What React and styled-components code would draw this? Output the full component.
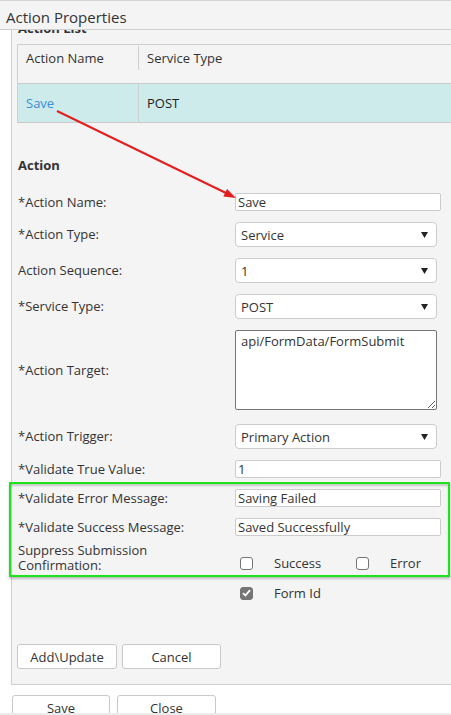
import React from "react";
import styled, { createGlobalStyle, css } from "styled-components";

const Global = createGlobalStyle`
  html, body { margin: 0; padding: 0; background: #fff; }
  * { box-sizing: border-box; }
`;

const Page = styled.div`
  position: relative;
  width: 451px;
  height: 715px;
  overflow: hidden;
  display: flex;
  flex-direction: column;
  background: #fff;
  font-family: "Open Sans", "Noto Sans", sans-serif;
  color: #333;
`;

const TitleBar = styled.div`
  flex: 0 0 30px;
  height: 30px;
  border-top: 1px solid #d2d2d2;
  border-bottom: 1px solid #cdcdcd;
  background: #f4f4f4;
  padding: 3px 0 0 6px;
  display: flex;
  align-items: center;
  font-size: 15px;
  color: #333;
`;

const Content = styled.div`
  flex: 1 1 auto;
  overflow: hidden;
  padding-left: 11px;
`;

const Panel = styled.div`
  width: 470px;
  margin-top: -11px;
  border-left: 1px solid #cfcfcf;
  border-bottom: 1px solid #cfcfcf;
  background: #f4f4f4;
  padding: 0 0 15px 5px;
`;

const Heading = styled.div`
  font-size: 13px;
  font-weight: 700;
  line-height: 18px;
  color: #333;
  margin: ${(p) => p.$margin || "0"};
`;

const TableBox = styled.div`
  border-top: 1px solid #cfcfcf;
  border-left: 1px solid #cfcfcf;
`;

const TableRow = styled.div`
  display: grid;
  grid-template-columns: 121px 1fr;
  height: 39px;
  border-bottom: 1px solid #cacaca;
  background: ${(p) => (p.$selected ? "#cdebeb" : "#f4f4f4")};
`;

const HeadCell = styled.div`
  padding-top: 1px;
`;

const HeadLabel = styled.div`
  height: 24px;
  line-height: 24px;
  padding-left: 8px;
  font-size: 13px;
  color: #333;
  ${(p) => p.$divider && css`border-right: 1px solid #d0d0d0;`}
`;

const DataCell = styled.div`
  display: flex;
  align-items: center;
  padding-left: 8px;
  font-size: 13px;
  color: ${(p) => (p.$link ? "#3b8dd5" : "#222")};
  ${(p) => p.$divider && css`border-right: 1px solid #d0d0d0;`}
`;

const Form = styled.div`
  display: flex;
  flex-direction: column;
  gap: 11px;
  padding-left: 1px;
`;

const Row = styled.div`
  display: grid;
  grid-template-columns: 217px 1fr;
  align-items: ${(p) => p.$align || "center"};
  margin-top: ${(p) => p.$mt || "0"};
`;

const Label = styled.div`
  font-size: 13px;
  line-height: 15px;
  color: #333;
  max-width: 190px;
`;

const TextInput = styled.input`
  width: 206px;
  height: 18px;
  border: 1px solid #cccccc;
  border-radius: 2px;
  background: #fff;
  padding: 0 2px;
  margin: 0;
  font-family: "Open Sans", "Noto Sans", sans-serif;
  font-size: 13px;
  color: #333;
  outline: none;
`;

const SelectBox = styled.div`
  width: 202px;
  height: 25px;
  border: 1px solid #cccccc;
  border-radius: 4px;
  background: #fff;
  padding: 0 8px 0 5px;
  display: flex;
  align-items: center;
  justify-content: space-between;
  font-size: 13px;
  color: #333;
`;

const Area = styled.textarea`
  width: 202px;
  height: 80px;
  border: 1px solid #767676;
  border-radius: 2px;
  background: #fff;
  padding: 1px 5px;
  margin: 0;
  font-family: "Open Sans", "Noto Sans", sans-serif;
  font-size: 13px;
  line-height: 18px;
  color: #333;
  outline: none;
  display: block;
`;

const Group = styled.div`
  position: relative;
  display: flex;
  flex-direction: column;
  gap: 11px;
`;

const Highlight = styled.div`
  position: absolute;
  top: -7px;
  left: -9px;
  width: 441px;
  bottom: -4px;
  border: 2px solid #1fe21f;
  box-shadow: 0 2px 2px rgba(0, 0, 0, 0.22), inset 0 2px 2px rgba(0, 0, 0, 0.18);
  pointer-events: none;
`;

const Options = styled.div`
  display: flex;
  padding-left: 5px;
  margin-top: ${(p) => p.$mt || "0"};
`;

const Option = styled.div`
  display: flex;
  align-items: center;
  width: 116px;
  font-size: 13px;
  color: #333;
`;

const Box = styled.span`
  width: 13px;
  height: 13px;
  flex: 0 0 13px;
  border: 1px solid #747474;
  border-radius: 3px;
  background: ${(p) => (p.$checked ? "#767676" : "#fff")};
  display: flex;
  align-items: center;
  justify-content: center;
  margin-right: 21px;
`;

const ButtonRow = styled.div`
  display: flex;
  gap: ${(p) => p.$gap || "5px"};
  margin: ${(p) => p.$margin || "0"};
`;

const Button = styled.div`
  width: ${(p) => p.$w || "100px"};
  height: 25px;
  border: 1px solid #c9c9c9;
  border-radius: 3px;
  background: #fff;
  display: flex;
  align-items: center;
  justify-content: center;
  font-size: 13px;
  color: #333;
`;

const BottomStrip = styled.div`
  flex: 0 0 2px;
  background: #ececec;
`;

const Overlay = styled.svg`
  position: absolute;
  left: 0;
  top: 0;
  pointer-events: none;
`;

const Caret = () => (
  <svg width="7" height="6" viewBox="0 0 7 6">
    <polygon points="0,0 7,0 3.5,6" fill="#222" />
  </svg>
);

const Check = () => (
  <svg width="9" height="8" viewBox="0 0 9 8">
    <path d="M1 4.2 L3.4 6.5 L8 1.2" stroke="#fff" strokeWidth="1.8" fill="none" />
  </svg>
);

const Select = ({ value }) => (
  <SelectBox>
    <span>{value}</span>
    <Caret />
  </SelectBox>
);

const CheckOption = ({ label, checked }) => (
  <Option>
    <Box $checked={checked}>{checked && <Check />}</Box>
    <span>{label}</span>
  </Option>
);

export default function App() {
  return (
    <Page>
      <Global />
      <TitleBar>Action Properties</TitleBar>
      <Content>
        <Panel>
          <Heading $margin="0 0 7px 1px">Action List</Heading>
          <TableBox>
            <TableRow>
              <HeadCell>
                <HeadLabel $divider>Action Name</HeadLabel>
              </HeadCell>
              <HeadCell>
                <HeadLabel>Service Type</HeadLabel>
              </HeadCell>
            </TableRow>
            <TableRow $selected>
              <DataCell $link $divider>Save</DataCell>
              <DataCell>POST</DataCell>
            </TableRow>
          </TableBox>
          <Heading $margin="33px 0 19px 1px">Action</Heading>
          <Form>
            <Row>
              <Label>*Action Name:</Label>
              <TextInput readOnly value="Save" />
            </Row>
            <Row>
              <Label>*Action Type:</Label>
              <Select value="Service" />
            </Row>
            <Row>
              <Label>Action Sequence:</Label>
              <Select value="1" />
            </Row>
            <Row>
              <Label>*Service Type:</Label>
              <Select value="POST" />
            </Row>
            <Row>
              <Label>*Action Target:</Label>
              <Area readOnly value="api/FormData/FormSubmit" />
            </Row>
            <Row $mt="3px">
              <Label>*Action Trigger:</Label>
              <Select value="Primary Action" />
            </Row>
            <Row>
              <Label>*Validate True Value:</Label>
              <TextInput readOnly value="1" />
            </Row>
            <Group>
              <Highlight />
              <Row>
                <Label>*Validate Error Message:</Label>
                <TextInput readOnly value="Saving Failed" />
              </Row>
              <Row>
                <Label>*Validate Success Message:</Label>
                <TextInput readOnly value="Saved Successfully" />
              </Row>
              <Row $align="start" $mt="-4px">
                <Label>Suppress Submission Confirmation:</Label>
                <Options $mt="11px">
                  <CheckOption label="Success" />
                  <CheckOption label="Error" />
                </Options>
              </Row>
            </Group>
            <Row>
              <span />
              <Options>
                <CheckOption label="Form Id" checked />
              </Options>
            </Row>
          </Form>
          <ButtonRow $margin="42px 0 0 0">
            <Button>Add\Update</Button>
            <Button $w="99px">Cancel</Button>
          </ButtonRow>
        </Panel>
        <ButtonRow $gap="7px" $margin="10px 0 0 1px">
          <Button $w="98px">Save</Button>
          <Button $w="99px">Close</Button>
        </ButtonRow>
      </Content>
      <BottomStrip />
      <Overlay width="451" height="715" viewBox="0 0 451 715">
        <line x1="57" y1="111" x2="226" y2="193" stroke="#e41e1e" strokeWidth="2" />
        <polygon points="236,198 223.3,196.6 227.1,189" fill="#e41e1e" />
      </Overlay>
    </Page>
  );
}
